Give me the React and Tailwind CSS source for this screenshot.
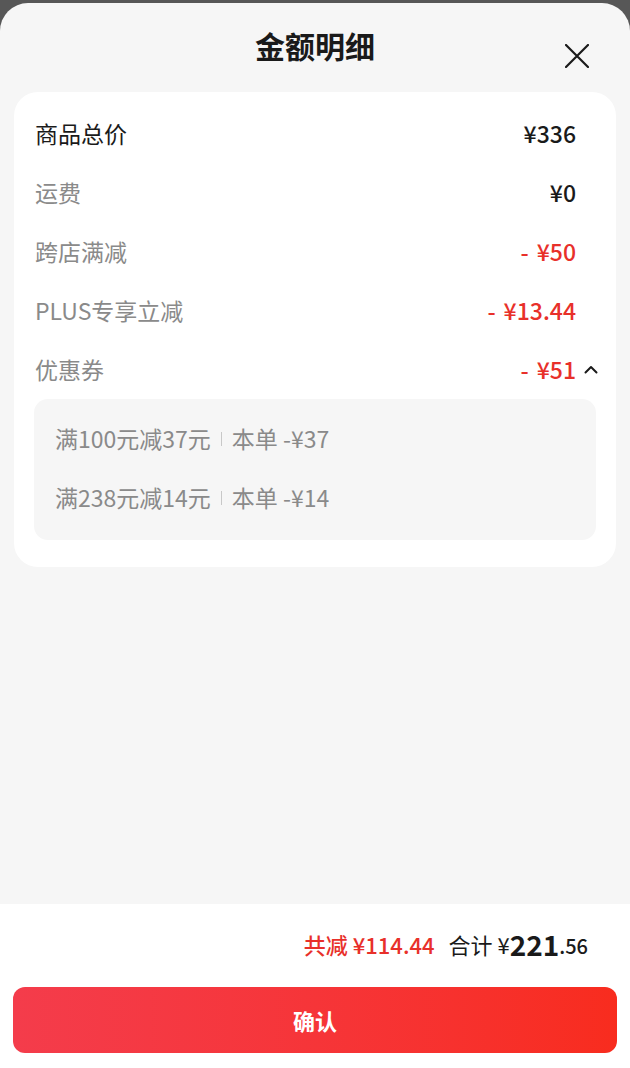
import React from "react";

const rows = [
	{ label: "商品总价", value: "¥336", dark: true },
	{ label: "运费", value: "¥0" },
	{ label: "跨店满减", value: "¥50", minus: true },
	{ label: "PLUS专享立减", value: "¥13.44", minus: true },
];

const coupons = [
	{ rule: "满100元减37元", save: "本单 -¥37" },
	{ rule: "满238元减14元", save: "本单 -¥14" },
];

const font = { fontFamily: '"Noto Sans CJK SC", "Noto Sans", sans-serif' };

const Row = ({ label, value, dark, minus, open }) => (
	<div className="flex h-[59px] items-center pl-[21px] pr-[18px]">
		<span className={`flex-1 text-[23px] ${dark ? "text-[#1a1a1a]" : "text-[#8a8a8a]"}`}>{label}</span>
		<span className={`text-[23px] font-medium ${minus ? "text-[#e8302a]" : "text-[#1a1a1a]"}`}>
			{minus && <span className="mr-[8px]">-</span>}
			{value}
		</span>
		<span className="flex w-[22px] justify-end">
			{open && (
				<svg width="14" height="9" viewBox="0 0 14 9" fill="none">
					<path d="M1.5 7.5 L7 2 L12.5 7.5" stroke="#1a1a1a" strokeWidth="2" strokeLinecap="round" strokeLinejoin="round" />
				</svg>
			)}
		</span>
	</div>
);

export default function App() {
	return (
		<div className="flex h-[1068px] flex-col bg-[#575757] pt-[3px]" style={font}>
			<div className="flex flex-1 flex-col overflow-hidden rounded-t-[28px] bg-[#f6f6f6]">
				{/* header */}
				<div className="relative flex h-[89px] items-center justify-center pb-[4px]">
					<h1 className="text-[30px] font-bold text-[#1a1a1a]">金额明细</h1>
					<button className="absolute right-[41px] top-[41px]">
						<svg width="24" height="24" viewBox="0 0 24 24" fill="none">
							<path d="M1 1 L23 23 M23 1 L1 23" stroke="#1a1a1a" strokeWidth="2.2" strokeLinecap="round" />
						</svg>
					</button>
				</div>

				{/* detail card */}
				<div className="mx-[14px] rounded-[24px] bg-white pt-[12px] pb-[27px]">
					{rows.map((r) => (
						<Row key={r.label} {...r} />
					))}
					<Row label="优惠券" value="¥51" minus open />
					<div className="mx-[20px] rounded-[14px] bg-[#f6f6f6] pt-[10px] pb-[13px] pl-[21px]">
						{coupons.map((c) => (
							<div key={c.rule} className="flex h-[59px] items-center text-[23px] text-[#8a8a8a]">
								<span>{c.rule}</span>
								<span className="mx-[10px] h-[14px] w-px bg-[#c8c8c8]" />
								<span>{c.save}</span>
							</div>
						))}
					</div>
				</div>

				<div className="flex-1" />

				{/* footer */}
				<div className="flex h-[164px] flex-col bg-white px-[13px] pb-[15px]">
					<div className="flex h-[80px] items-center justify-end pr-[29px]">
						<span className="text-[22px] font-medium text-[#e8302a]">共减 ¥114.44</span>
						<span className="ml-[14px] text-[22px] text-[#1a1a1a]">合计 ¥</span>
						<span className="text-[28px] font-semibold leading-none text-[#1a1a1a]">221</span>
						<span className="self-center pt-[4px] text-[20px] font-medium text-[#1a1a1a]">.56</span>
					</div>
					<button className="mt-[3px] flex h-[66px] items-center justify-center rounded-[12px] bg-gradient-to-r from-[#f43c4b] to-[#f82c1e] text-[22px] font-bold text-white">
						确认
					</button>
				</div>
			</div>
		</div>
	);
}
